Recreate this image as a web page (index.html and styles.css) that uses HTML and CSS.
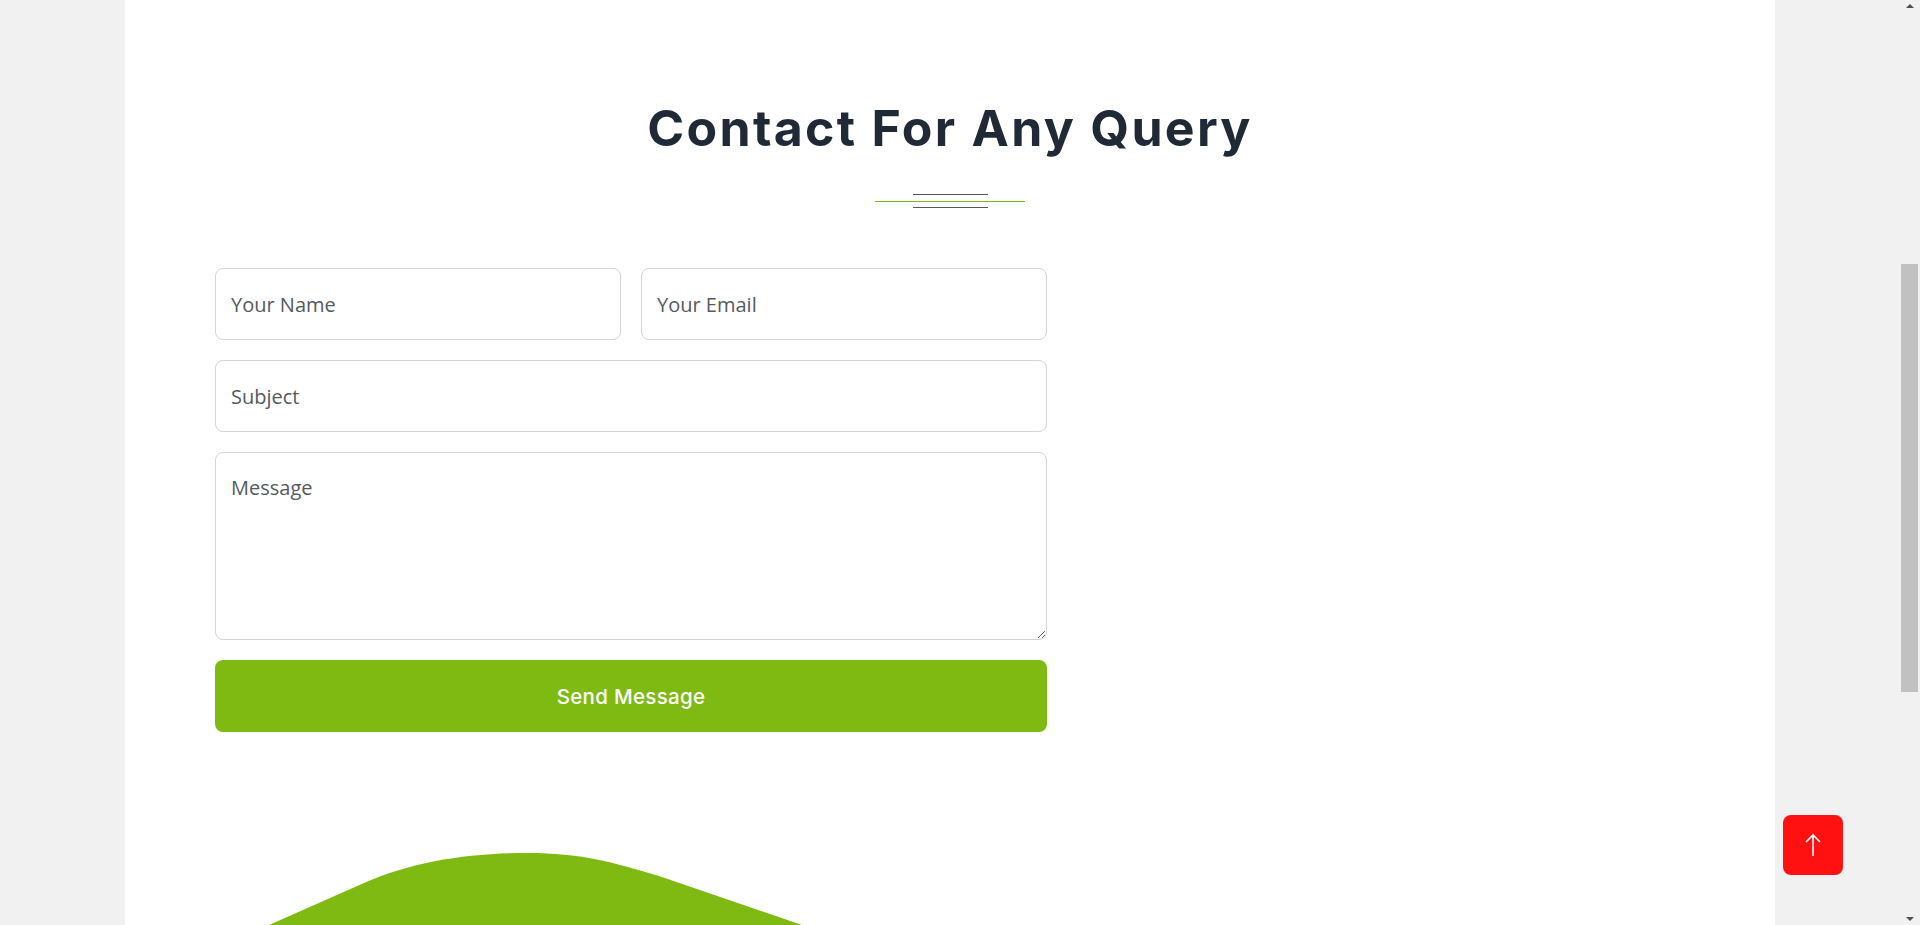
FILE: index.html
```html
<!DOCTYPE html>
<html lang="en">
<head>
<meta charset="utf-8">
<title>Contact For Any Query</title>
<link rel="stylesheet" href="styles.css">
</head>
<body>
<div class="viewport">
  <main class="page">
    <section class="panel">
      <h1 class="title">Contact For Any Query</h1>
      <div class="divider">
        <span class="line-gray"></span>
        <span class="line-green"></span>
        <span class="line-gray last"></span>
      </div>
      <form class="contact-form">
        <div class="row two">
          <input class="field" type="text" placeholder="Your Name">
          <input class="field" type="email" placeholder="Your Email">
        </div>
        <input class="field" type="text" placeholder="Subject">
        <textarea class="field area" placeholder="Message"></textarea>
        <button class="send" type="button">Send Message</button>
      </form>
      <svg class="blob" width="1650" height="100" viewBox="125 825 1650 100" aria-hidden="true">
        <path d="M269 925 L364 883 C414 861 470 853 528 853 C580 853 612 862 659 876 L802 925 Z" fill="#7fba12"/>
      </svg>
    </section>
  </main>
  <div class="scrollbar">
    <span class="arrow up"></span>
    <div class="track"><span class="thumb"></span></div>
    <span class="arrow down"></span>
  </div>
</div>
<a class="to-top" href="#" aria-label="Back to top">
  <svg width="20" height="24" viewBox="0 0 20 24"><path d="M10 23 V2 M3 9 L10 2 L17 9" fill="none" stroke="#fff" stroke-width="1.6"/></svg>
</a>
</body>
</html>
```

FILE: styles.css
```css
html, body {
  margin: 0;
  padding: 0;
  height: 925px;
  overflow: hidden;
}
body {
  background: #f1f1f1;
  font-family: "Open Sans", "Liberation Sans", sans-serif;
}
.viewport {
  display: flex;
  height: 925px;
}
.page {
  flex: 1;
  display: flex;
  justify-content: center;
  background: #f1f1f1;
}
.panel {
  width: 1650px;
  height: 925px;
  background: #fff;
  overflow: hidden;
  display: flex;
  flex-direction: column;
  padding-top: 98px;
  box-sizing: border-box;
}
.title {
  margin: 0;
  text-align: center;
  font-family: Inter, "Liberation Sans", sans-serif;
  font-weight: 700;
  font-size: 50px;
  letter-spacing: 2.3px;
  line-height: 1.2;
  color: #1f2a36;
}
.divider {
  margin-top: 36px;
  display: flex;
  flex-direction: column;
  align-items: center;
}
.line-gray {
  width: 75px;
  height: 1px;
  background: #555;
  margin-bottom: 6px;
}
.line-gray.last { margin-bottom: 0; }
.line-green {
  width: 150px;
  height: 1px;
  background: #7fba12;
  margin-bottom: 5px;
}
.contact-form {
  margin-top: 60px;
  margin-left: 90px;
  width: 832px;
  display: flex;
  flex-direction: column;
  gap: 20px;
}
.row.two {
  display: grid;
  grid-template-columns: 1fr 1fr;
  gap: 20px;
}
.field {
  box-sizing: border-box;
  height: 72px;
  width: 100%;
  border: 1px solid #ced4da;
  border-radius: 8px;
  background: #fff;
  padding: 20px 15px;
  font-family: "Open Sans", sans-serif;
  font-size: 20px;
  line-height: 30px;
  color: #333;
  outline: none;
}
.field::placeholder {
  color: #555a60;
  opacity: 1;
}
.area {
  height: 188px;
  resize: both;
  display: block;
}
.send {
  height: 72px;
  border: 0;
  border-radius: 8px;
  background: #7fba12;
  color: #fff;
  font-family: Inter, "DejaVu Sans", sans-serif;
  font-weight: 500;
  font-size: 20.5px;
  letter-spacing: 0.3px;
}
.blob {
  margin-top: 93px;
  display: block;
  flex: none;
}
.scrollbar {
  width: 20px;
  display: flex;
  flex-direction: column;
  align-items: center;
  background: #f1f1f1;
}
.arrow {
  width: 0;
  height: 0;
  border-left: 4px solid transparent;
  border-right: 4px solid transparent;
}
.arrow.up {
  border-bottom: 4px solid #505050;
  margin-top: 4px;
}
.arrow.down {
  border-top: 4px solid #505050;
  margin-bottom: 4px;
}
.track {
  flex: 1;
  align-self: stretch;
  display: flex;
  flex-direction: column;
  padding-top: 256px;
}
.thumb {
  height: 428px;
  margin-left: 1px;
  width: 17px;
  background: #c1c1c1;
}
.to-top {
  position: fixed;
  right: 77px;
  bottom: 50px;
  width: 60px;
  height: 60px;
  border-radius: 8px;
  background: #ff1111;
  display: flex;
  align-items: center;
  justify-content: center;
}
```
